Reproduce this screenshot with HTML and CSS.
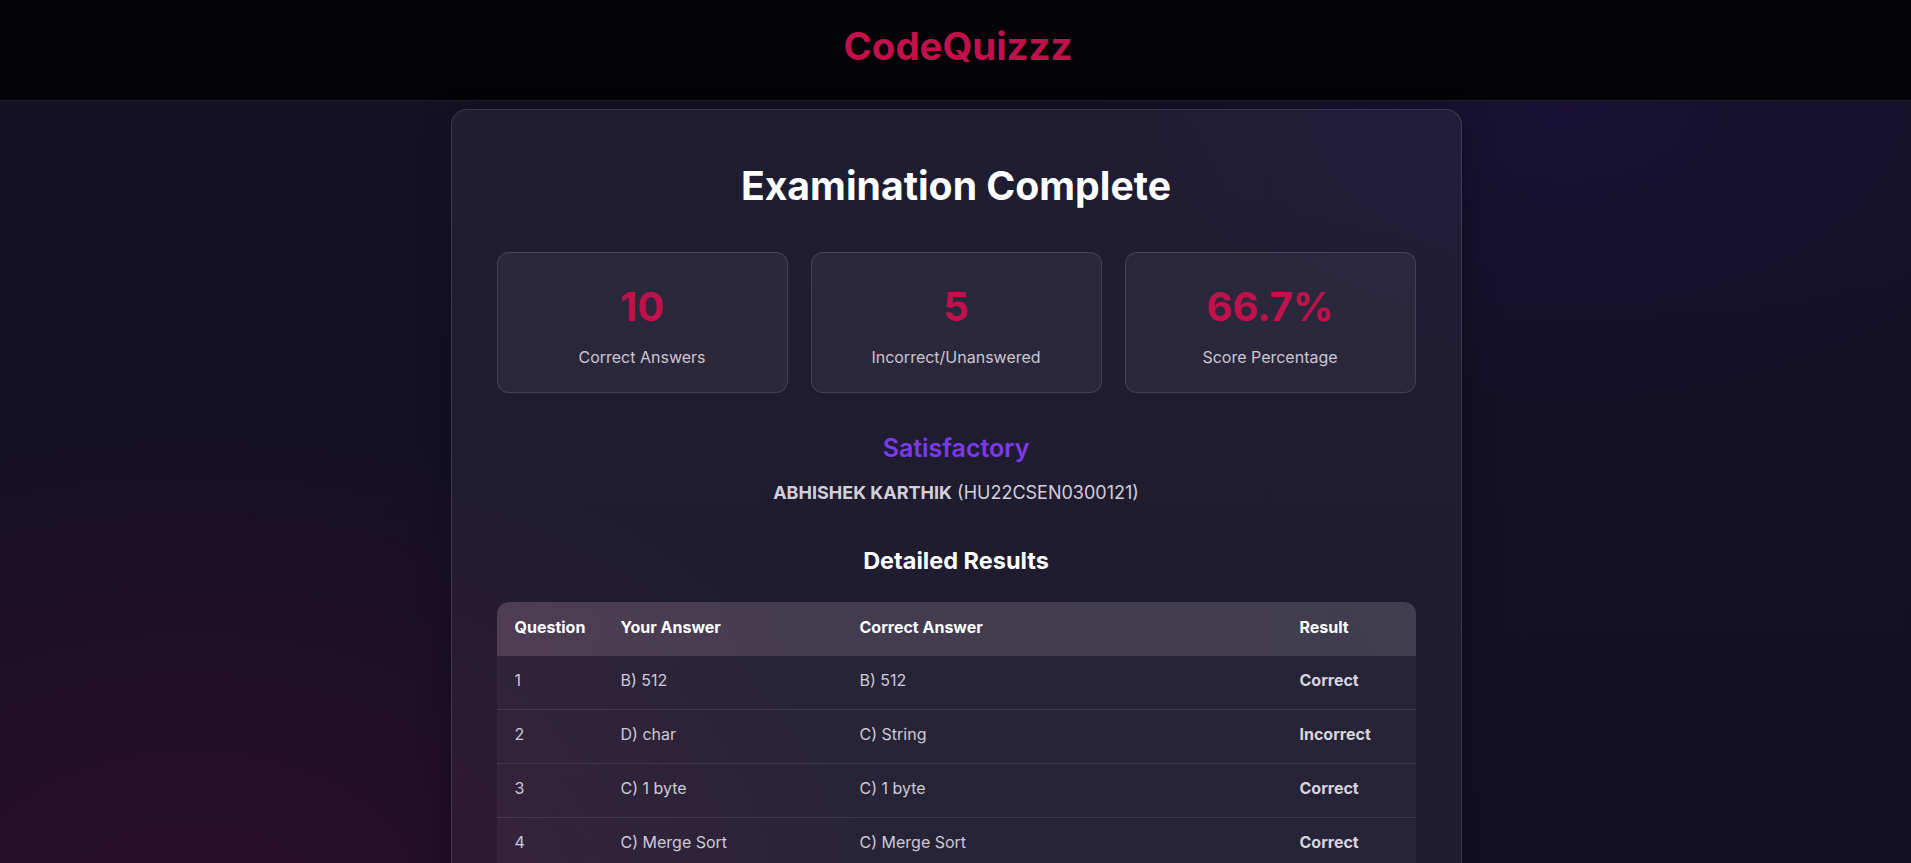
FILE: index.html
```html
<!DOCTYPE html>
<html lang="en">
<head>
<meta charset="utf-8">
<title>CodeQuizzz - Results</title>
<link rel="stylesheet" href="styles.css">
</head>
<body>
<header class="topbar">
  <div class="logo">CodeQuizzz</div>
</header>
<main class="page">
  <section class="results-card">
    <h1 class="title">Examination Complete</h1>
    <div class="stats">
      <div class="stat">
        <div class="stat-value">10</div>
        <div class="stat-label">Correct Answers</div>
      </div>
      <div class="stat">
        <div class="stat-value">5</div>
        <div class="stat-label">Incorrect/Unanswered</div>
      </div>
      <div class="stat">
        <div class="stat-value">66.7%</div>
        <div class="stat-label">Score Percentage</div>
      </div>
    </div>
    <div class="grade">Satisfactory</div>
    <div class="student"><strong>ABHISHEK KARTHIK</strong> (HU22CSEN0300121)</div>
    <h2 class="subtitle">Detailed Results</h2>
    <table class="results-table">
      <colgroup>
        <col class="c-q">
        <col class="c-your">
        <col class="c-correct">
        <col class="c-result">
      </colgroup>
      <thead>
        <tr><th>Question</th><th>Your Answer</th><th>Correct Answer</th><th>Result</th></tr>
      </thead>
      <tbody>
        <tr><td>1</td><td>B) 512</td><td>B) 512</td><td class="res">Correct</td></tr>
        <tr><td>2</td><td>D) char</td><td>C) String</td><td class="res">Incorrect</td></tr>
        <tr><td>3</td><td>C) 1 byte</td><td>C) 1 byte</td><td class="res">Correct</td></tr>
        <tr><td>4</td><td>C) Merge Sort</td><td>C) Merge Sort</td><td class="res">Correct</td></tr>
        <tr><td>5</td><td>A) O(n)</td><td>A) O(n)</td><td class="res">Correct</td></tr>
        <tr><td>6</td><td>B) Stack</td><td>B) Stack</td><td class="res">Correct</td></tr>
      </tbody>
    </table>
  </section>
</main>
</body>
</html>
```
FILE: styles.css
```css
* { box-sizing: border-box; }
html, body { margin: 0; padding: 0; }
body {
  font-family: Inter, "Noto Sans", "Liberation Sans", sans-serif;
  color: #fff;
  min-height: 100vh;
  overflow: hidden;
  background-color: #120f22;
  background-image:
    radial-gradient(ellipse 55% 70% at 10% 88%, rgba(70, 12, 50, 0.5), rgba(70, 12, 50, 0) 70%),
    radial-gradient(ellipse 40% 45% at 82% 10%, rgba(30, 18, 70, 0.45), rgba(30, 18, 70, 0) 70%),
    linear-gradient(180deg, #141126 0%, #120f23 100%);
}
.topbar {
  height: 101px;
  background: #040308;
  border-bottom: 1px solid rgba(255, 255, 255, 0.12);
  display: flex;
  justify-content: center;
  padding: 23px 0 0 5px;
}
.logo {
  font-size: 38.4px;
  line-height: 46px;
  font-weight: 700;
  color: #c0114b;
}
.page {
  display: flex;
  justify-content: center;
  padding: 8px 0 0 1px;
}
.results-card {
  width: 1011px;
  padding: 45px 45px 60px;
  border: 1px solid rgba(255, 255, 255, 0.12);
  border-radius: 16px;
  background: rgba(255, 255, 255, 0.05);
  box-shadow: 0 8px 32px rgba(0, 0, 0, 0.35);
}
.title {
  margin: 7px 0 0;
  text-align: center;
  font-size: 39.2px;
  line-height: 48px;
  font-weight: 700;
  color: #fff;
}
.stats {
  margin-top: 42px;
  display: grid;
  grid-template-columns: repeat(3, 1fr);
  gap: 23px;
}
.stat {
  height: 141px;
  padding: 30px 16px 0;
  border: 1px solid rgba(255, 255, 255, 0.12);
  border-radius: 12px;
  background: rgba(255, 255, 255, 0.05);
  text-align: center;
}
.stat-value {
  font-size: 40px;
  line-height: 48px;
  font-weight: 700;
  color: #c0114b;
  margin-bottom: 14px;
}
.stat-label {
  font-size: 16px;
  line-height: 24px;
  color: #cbc6d3;
}
.grade {
  margin-top: 40px;
  text-align: center;
  font-size: 25px;
  line-height: 30px;
  font-weight: 600;
  color: #7c3aed;
}
.student {
  margin-top: 17px;
  text-align: center;
  font-size: 18px;
  line-height: 26px;
  color: #d3cfda;
}
.student strong { font-weight: 700; }
.subtitle {
  margin: 41px 0 0;
  text-align: center;
  font-size: 23.5px;
  line-height: 28px;
  font-weight: 700;
  color: #fff;
}
.results-table {
  margin-top: 27px;
  width: 100%;
  border-collapse: separate;
  border-spacing: 0;
  table-layout: fixed;
}
.c-q { width: 106px; }
.c-your { width: 239px; }
.c-correct { width: 440px; }
.c-result { width: 134px; }
.results-table th {
  text-align: left;
  font-size: 16px;
  line-height: 22px;
  font-weight: 700;
  color: #fff;
  padding: 14px 18px 18px;
  background: rgba(255, 255, 255, 0.14);
}
.results-table thead tr {
  background: linear-gradient(90deg, rgba(200, 60, 130, 0.08), rgba(200, 60, 130, 0.04) 40%, rgba(120, 110, 180, 0.03));
}
.results-table th:first-child { border-top-left-radius: 12px; }
.results-table th:last-child { border-top-right-radius: 12px; }
.results-table td {
  font-size: 16px;
  line-height: 21px;
  color: #cfcad6;
  padding: 14px 18px 18px;
  background: rgba(255, 255, 255, 0.04);
  border-bottom: 1px solid rgba(255, 255, 255, 0.1);
}
.results-table td.res {
  font-weight: 700;
  color: #d8d5de;
}
```
